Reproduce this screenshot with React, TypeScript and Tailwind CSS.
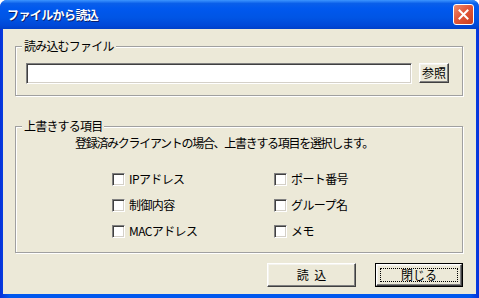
const FONT = { fontFamily: '"Noto Sans CJK JP", "Noto Sans", sans-serif' };

const sunken =
  "border border-t-[#808080] border-l-[#808080] border-b-white border-r-white shadow-[inset_1px_1px_0_#404040,inset_-1px_-1px_0_#d4d0c8]";
const raised =
  "border border-t-white border-l-white border-b-[#404040] border-r-[#404040] shadow-[inset_-1px_-1px_0_#808080,inset_1px_1px_0_#f4f3ee]";

function GroupBox({
  label,
  className,
  children,
}: {
  label: string;
  className?: string;
  children: React.ReactNode;
}) {
  return (
    <div
      className={`relative border border-[#a0a0a0] shadow-[inset_1px_1px_0_#fff,1px_1px_0_#fff] ${className ?? ""}`}
    >
      <span className="absolute -top-[9px] left-[6px] bg-[#ece9d8] px-[2px] text-[12px] leading-[16px] tracking-[-0.8px] text-black">
        {label}
      </span>
      {children}
    </div>
  );
}

function Check({ label }: { label: string }) {
  return (
    <label className="flex h-[26px] items-center gap-[4px]">
      <span className={`h-[13px] w-[13px] bg-white ${sunken}`} />
      <span className="text-[12px] leading-[16px] tracking-[-0.6px] text-black">
        {label}
      </span>
    </label>
  );
}

export default function App() {
  return (
    <div
      style={FONT}
      className="flex h-[298px] w-[479px] flex-col overflow-hidden rounded-t-[7px] bg-[linear-gradient(to_right,#0831d9,#0058ee_2%,#0058ee_98%,#0831d9)]"
    >
      {/* title bar */}
      <div className="flex h-[29px] shrink-0 items-center justify-between bg-[linear-gradient(to_bottom,#3d95ff_0%,#0a5fea_12%,#0058ee_30%,#0055e5_60%,#0048d8_88%,#003fc8_100%)] pl-[7px] pr-[5px]">
        <span className="pt-[1px] text-[12px] font-bold leading-[16px] tracking-[-0.6px] text-white [text-shadow:1px_1px_0_#0a1e6e]">
          ファイルから読込
        </span>
        <button
          type="button"
          className="flex h-[21px] w-[21px] items-center justify-center rounded-[3px] border border-white bg-[linear-gradient(135deg,#f08d6e_0%,#e2573a_45%,#c93d1f_100%)]"
        >
          <svg width="11" height="11" viewBox="0 0 11 11">
            <path d="M1.5 1.5 L9.5 9.5 M9.5 1.5 L1.5 9.5" stroke="#fff" strokeWidth="2" strokeLinecap="square" />
          </svg>
        </button>
      </div>

      {/* client area */}
      <div className="mx-[3px] mb-[4px] flex-1 bg-[#ece9d8] pl-[12px] pt-[17px]">
        <GroupBox label="読み込むファイル" className="h-[50px] w-[448px]">
          <div className="flex items-start gap-[7px] pl-[10px] pt-[16px]">
            <div className={`h-[21px] w-[386px] bg-white ${sunken}`} />
            <button
              type="button"
              className={`h-[20px] w-[30px] bg-[#ece9d8] text-[12px] leading-[14px] text-black ${raised}`}
            >
              参照
            </button>
          </div>
        </GroupBox>

        <GroupBox label="上書きする項目" className="mt-[30px] h-[127px] w-[448px]">
          <p className="pl-[59px] pt-[8px] text-[12px] leading-[16px] tracking-[-1.3px] text-black">
            登録済みクライアントの場合、上書きする項目を選択します。
          </p>
          <div className="mt-[15px] grid grid-cols-[162px_162px] pl-[96px]">
            <Check label="IPアドレス" />
            <Check label="ポート番号" />
            <Check label="制御内容" />
            <Check label="グループ名" />
            <Check label="MACアドレス" />
            <Check label="メモ" />
          </div>
        </GroupBox>

        <div className="mt-[10px] flex gap-[19px] pl-[252px]">
          <button
            type="button"
            className={`h-[24px] w-[89px] bg-[#ece9d8] text-[12px] leading-[16px] text-black ${raised}`}
          >
            読&nbsp;&nbsp;込
          </button>
          <button
            type="button"
            className="h-[24px] w-[88px] border border-black bg-[#ece9d8] p-0"
          >
            <div className={`flex h-full w-full items-center justify-center p-[3px] ${raised}`}>
              <div className="flex h-full w-full items-center justify-center border border-dotted border-black text-[12px] leading-[14px] text-black">
                閉じる
              </div>
            </div>
          </button>
        </div>
      </div>
    </div>
  );
}
